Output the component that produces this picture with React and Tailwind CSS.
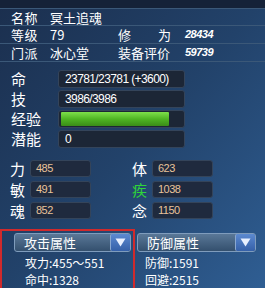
import React from 'react';

const cjk = { fontFamily: '"Noto Sans CJK SC", "Noto Sans", sans-serif' };

const InfoRow = ({ label, value, label2, value2, last }) => (
  <div className={`flex items-center h-[20px] ${last ? '' : 'border-b border-[#3b5878]'}`}>
    <span className="shrink-0 w-[50px] pl-[11px] text-[13px] tracking-[0.5px] leading-none text-white whitespace-nowrap">{label}</span>
    <span className="shrink-0 w-[68px] text-[13px] leading-none text-white whitespace-nowrap">{value}</span>
    {label2 && (
      <>
        <span className="shrink-0 w-[67px] text-[13px] leading-none text-white whitespace-nowrap">{label2}</span>
        <span className="text-[11px] italic font-bold leading-none text-white font-['Liberation_Sans'] tracking-[-0.5px]">{value2}</span>
      </>
    )}
  </div>
);

const BarRow = ({ label, children }) => (
  <div className="flex items-center h-[18px]">
    <span className="shrink-0 w-[58px] pl-[11px] text-[15px] leading-none text-white whitespace-nowrap">{label}</span>
    <div className="shrink-0 w-[127px] h-[18px] rounded-[3px] bg-[#1c2636] border border-[#34445a] flex items-center pl-[6px] text-[12px] text-white font-['Liberation_Sans'] tracking-[-0.6px] overflow-hidden whitespace-nowrap">
      {children}
    </div>
  </div>
);

const Stat = ({ label, value, green }) => (
  <div className="flex items-center h-[17px]">
    <span className={`shrink-0 w-[30px] pl-[10px] text-[15px] leading-none ${green ? 'text-[#2fd43a]' : 'text-white'}`}>{label}</span>
    <div className="shrink-0 w-[61px] h-[17px] rounded-[3px] bg-[#1f2a3e] border border-[#34445a] flex items-center pl-[5px] text-[11px] text-[#e9c39a] font-['Liberation_Sans'] tracking-[-0.5px]">
      {value}
    </div>
  </div>
);

const Dropdown = ({ title }) => (
  <div className="h-[19px] rounded-[3px] border border-[#7f9cbc] bg-gradient-to-b from-[#5a7898] to-[#34506e] flex items-center">
    <span className="flex-1 pl-[9px] text-[13px] leading-none text-white">{title}</span>
    <div className="w-[20px] h-[17px] rounded-[2px] bg-gradient-to-b from-[#5c8ad0] to-[#3560a8] border-l border-[#8aa8d0] flex items-center justify-center">
      <svg width="11" height="9" viewBox="0 0 11 9">
        <path d="M0.5 0.5 L10.5 0.5 L5.5 8.5 Z" fill="#e8f0ff" />
      </svg>
    </div>
  </div>
);

export default function App() {
  return (
    <div
      className="w-[265px] h-[288px] overflow-hidden flex flex-col bg-gradient-to-br from-[#1b2f4e] via-[#22426a] to-[#2f5e93]"
      style={cjk}
    >
      <div className="shrink-0 h-[9px] bg-[#152238] border-b border-[#3b5878]" />
      <InfoRow label="名称" value="冥土追魂" />
      <InfoRow
        label="等级"
        value="79"
        label2={<span className="flex w-[53px] justify-between"><span>修</span><span>为</span></span>}
        value2="28434"
      />
      <InfoRow label="门派" value="冰心堂" label2="装备评价" value2="59739" last />
      <div className="shrink-0 h-px bg-[#3b5878]" />

      <div className="flex flex-col gap-[2px] mt-[8px]">
        <BarRow label="命">23781/23781 (+3600)</BarRow>
        <BarRow label="技">3986/3986</BarRow>
        <BarRow label="经验">
          <div className="-ml-[4px] w-[108px] h-[14px] rounded-[1px] bg-gradient-to-b from-[#7ee04a] via-[#4fb523] to-[#3a8c18]" />
        </BarRow>
        <BarRow label="潜能">0</BarRow>
      </div>

      <div className="flex mt-[12px]">
        <div className="w-[121px] flex flex-col gap-[4px]">
          <Stat label="力" value="485" />
          <Stat label="敏" value="491" />
          <Stat label="魂" value="852" />
        </div>
        <div className="flex flex-col gap-[4px] pl-[1px]">
          <Stat label="体" value="623" />
          <Stat label="疾" value="1038" green />
          <Stat label="念" value="1150" />
        </div>
      </div>

      <div className="flex flex-1 mt-[10px]">
        <div className="w-[135px] border-t-2 border-l-2 border-r-2 border-[#d02a2c] pl-[12px] pr-[2px] pt-[2px]">
          <Dropdown title="攻击属性" />
          <div className="pl-[11px] pt-[2px] text-[12px] leading-[17px] text-white whitespace-nowrap">
            <div>攻力:455～551</div>
            <div>命中:1328</div>
          </div>
        </div>
        <div className="w-[121px] pl-[2px] pt-[4px]">
          <Dropdown title="防御属性" />
          <div className="pl-[8px] pt-[2px] text-[12px] leading-[17px] text-white whitespace-nowrap">
            <div>防御:1591</div>
            <div>回避:2515</div>
          </div>
        </div>
      </div>
    </div>
  );
}
